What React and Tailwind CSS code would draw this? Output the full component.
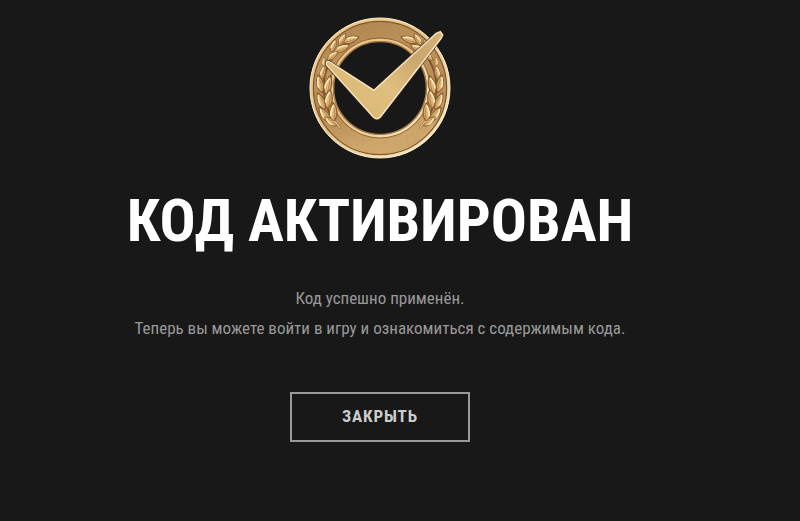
import React from "react";

// x, y, rotation, scale
const leaves = [
  [152, 89, 72, 1],
  [126, 89, 30, 0.8],
  [124, 116, 66, 1],
  [100, 108, 20, 0.8],
  [97, 138, 50, 0.8],
  [72, 157, 0, 0.6],
  [68, 188, 10, 0.8],
  [60, 222, -14, 1.05],
  [84, 226, 14, 1.1],
  [64, 274, -25, 1.05],
  [86, 268, 8, 1.1],
  [74, 314, -38, 1.05],
  [100, 308, 2, 1.1],
  [92, 335, -52, 0.85],
];

function Laurel() {
  return (
    <g>
      <path d="M122 354C90 326 70 278 71 226C72 174 100 124 148 92" fill="none" stroke="#80542a" strokeWidth="6" />
      {leaves.map(([x, y, angle, scale]) => (
        <g key={`${x}-${y}`} transform={`translate(${x} ${y}) rotate(${angle}) scale(${scale})`}>
          <path d="M0 25C-13 14-13-9 0-27C13-9 13 14 0 25Z" fill="url(#leaf)" stroke="#8a5d30" strokeWidth="3" />
          <path d="M-6 10C-9 0-5-11 0-20" fill="none" stroke="#fff0bd" strokeWidth="4" />
          <path d="M2 18C5 6 4-5 1-14" fill="none" stroke="#a8753d" strokeWidth="2" />
        </g>
      ))}
      <path d="M120 352L104 334" stroke="#efc889" strokeWidth="4" strokeLinecap="round" />
    </g>
  );
}

const checkPath =
  "M79 159Q81 151 90 156L222 241L409 70L421 65L428 75L424 84L241 321Q231 332 220 321L83 169Q77 163 79 159Z";

function Medal() {
  return (
    <svg viewBox="0 0 480 465" className="h-[155px] w-40" aria-hidden="true">
      <defs>
        <linearGradient id="rim" x1="0" y1="0" x2="1" y2="1">
          <stop offset="0" stopColor="#efcb8c" />
          <stop offset="0.45" stopColor="#e6c48b" />
          <stop offset="1" stopColor="#f8edcb" />
        </linearGradient>
        <linearGradient id="face" x1="0" y1="0" x2="0.3" y2="1">
          <stop offset="0" stopColor="#b08650" />
          <stop offset="0.35" stopColor="#bd945d" />
          <stop offset="0.7" stopColor="#b88c55" />
          <stop offset="1" stopColor="#cfa76d" />
        </linearGradient>
        <linearGradient id="leaf" x1="0" y1="0" x2="1" y2="1">
          <stop offset="0" stopColor="#f3d698" />
          <stop offset="1" stopColor="#cc9a5c" />
        </linearGradient>
        <linearGradient id="check" x1="0" y1="1" x2="1" y2="0">
          <stop offset="0" stopColor="#d9b56e" />
          <stop offset="0.45" stopColor="#dfbf7f" />
          <stop offset="0.75" stopColor="#c9a66b" />
          <stop offset="1" stopColor="#d6b47a" />
        </linearGradient>
        <filter id="grain" x="0" y="0" width="1" height="1">
          <feTurbulence type="fractalNoise" baseFrequency="0.06" numOctaves="3" seed="4" result="noise" />
          <feColorMatrix in="noise" type="matrix" values="0 0 0 0 0.45  0 0 0 0 0.28  0 0 0 0 0.1  0.6 0 0 0 -0.22" result="spots" />
          <feComposite in="spots" in2="SourceGraphic" operator="in" />
        </filter>
      </defs>
      <circle cx="240" cy="234" r="174" fill="none" stroke="url(#face)" strokeWidth="66" />
      <circle cx="240" cy="234" r="174" fill="none" stroke="#fff" strokeWidth="58" filter="url(#grain)" />
      <circle cx="240" cy="234" r="200" fill="none" stroke="#80552a" strokeWidth="4" />
      <circle cx="240" cy="234" r="206" fill="none" stroke="url(#rim)" strokeWidth="8" />
      <circle cx="240" cy="234" r="210" fill="none" stroke="#fbefcb" strokeWidth="3" />
      <circle cx="240" cy="234" r="150" fill="none" stroke="#95652f" strokeWidth="3" />
      <circle cx="240" cy="234" r="144" fill="none" stroke="url(#rim)" strokeWidth="7" />
      <circle cx="240" cy="234" r="139" fill="none" stroke="#a87a46" strokeWidth="4" />
      <Laurel />
      <g transform="matrix(-1 0 0 1 480 0)">
        <Laurel />
      </g>
      <path d={checkPath} fill="none" stroke="#3f2b1a" strokeWidth="8" strokeLinejoin="round" />
      <path d={checkPath} fill="url(#check)" stroke="#f8e8cb" strokeWidth="4" strokeLinejoin="round" />
    </svg>
  );
}

export default function App() {
  return (
    <main className="flex min-h-screen flex-col items-center bg-[#181818] pt-[10px] pr-10 text-center font-['Roboto_Condensed','Roboto',sans-serif]">
      <Medal />
      <h1 className="mt-5 text-[60px] leading-[72px] font-bold whitespace-nowrap text-white uppercase">
        Код активирован
      </h1>
      <div className="mt-[26px] text-[17px] leading-[30px] text-[#999]">
        <p>Код успешно применён.</p>
        <p>Теперь вы можете войти в игру и ознакомиться с содержимым кода.</p>
      </div>
      <button
        type="button"
        className="mt-[49px] h-[50px] w-[180px] border-2 border-[#999] text-[17px] font-bold tracking-wider text-[#ccc] uppercase"
      >
        Закрыть
      </button>
    </main>
  );
}
